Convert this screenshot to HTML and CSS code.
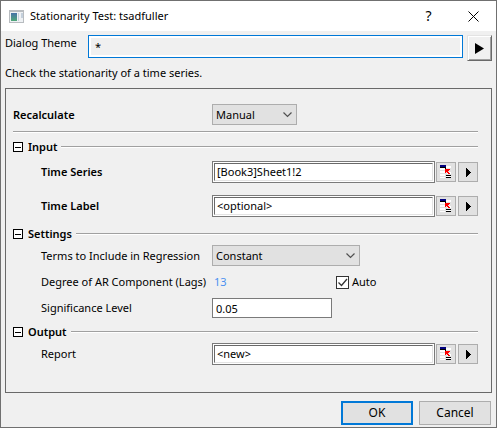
FILE: index.html
```
<!DOCTYPE html>
<html lang="en">
<head>
<meta charset="utf-8">
<title>Stationarity Test: tsadfuller</title>
<link rel="stylesheet" href="styles.css">
</head>
<body>
<svg class="defs" aria-hidden="true">
  <symbol id="pick" viewBox="0 0 12 14" shape-rendering="crispEdges">
    <path fill="#fff" d="M0 3h6v2H0zM6 1h5v2H6zM0 6h6v2H0zM7 7h4v2H7zM0 9h5v2H0zM0 12h5v1H0zM6 11h5v1H6z"/>
    <path fill="#000080" d="M0 0h6v2H0z"/>
    <path fill="#000" d="M0 2h6v1H0zM5 3h1v1H5zM6 10h5v1H6zM6 12h5v1H6z"/>
    <path fill="#f00" d="M5 4h5v1H9v1H8v1h1v1h1v1H8V8H7V7H6v1H5z"/>
  </symbol>
  <symbol id="play" viewBox="0 0 5 9" shape-rendering="crispEdges">
    <path d="M0 0h1v1h1v1h1v1h1v1h1v1H4v1H3v1H2v1H1v1H0z"/>
  </symbol>
</svg>
<main class="dialog">
  <header class="titlebar">
    <svg class="app-icon" viewBox="0 0 15 13" aria-hidden="true">
      <defs><linearGradient id="g" x2="0" y2="1"><stop stop-color="#4672a8"/><stop offset="1" stop-color="#4fa878"/></linearGradient></defs>
      <path fill="#b8bcc0" d="M0 0h15v13H0z"/><path fill="#eef1f4" d="M1 2h13v10H1z"/>
      <path fill="url(#g)" d="M2 3h6v8H2z"/><path fill="#c4d0dc" d="M9 3h1v8H9zM12 3h2v5h-2z"/>
    </svg>
    <h1 class="title">Stationarity Test: tsadfuller</h1>
    <button class="caption" aria-label="Help">?</button>
    <button class="caption" aria-label="Close"><svg width="11" height="11" viewBox="0 0 11 11"><path d="M.5.5l10 10M10.500.5l-10 10" stroke="#000" fill="none"/></svg></button>
  </header>
  <div class="theme">
    <label class="theme-label" for="theme">Dialog Theme</label>
    <input class="theme-input" id="theme" value="*" readonly>
    <button class="theme-menu" aria-label="Theme menu"><svg width="9" height="11" viewBox="0 0 9 11"><path d="M0 0l9 5.500L0 11z"/></svg></button>
  </div>
  <p class="description">Check the stationarity of a time series.</p>
  <form class="panel">
    <div class="row recalc">
      <label class="strong" for="recalc">Recalculate</label>
      <select class="short" id="recalc"><option>Manual</option></select>
    </div>
    <hr class="rule">
    <section>
      <h2 class="head"><button type="button" class="toggle" aria-label="Collapse Input"></button>Input<span class="line"></span></h2>
      <div class="body inputs">
        <div class="row">
          <label class="indent strong" for="series">Time Series</label>
          <div class="picker"><span class="well"><input id="series" value="[Book3]Sheet1!2"></span><button type="button" class="tool" aria-label="Select range"><svg width="12" height="14"><use href="#pick"/></svg></button><button type="button" class="tool menu" aria-label="Menu"><svg width="5" height="9"><use href="#play"/></svg></button></div>
        </div>
        <div class="row">
          <label class="indent strong" for="tlabel">Time Label</label>
          <div class="picker"><span class="well"><input id="tlabel" value="&lt;optional&gt;"></span><button type="button" class="tool" aria-label="Select range"><svg width="12" height="14"><use href="#pick"/></svg></button><button type="button" class="tool menu" aria-label="Menu"><svg width="5" height="9"><use href="#play"/></svg></button></div>
        </div>
      </div>
    </section>
    <section>
      <h2 class="head"><button type="button" class="toggle" aria-label="Collapse Settings"></button>Settings<span class="line"></span></h2>
      <div class="body settings">
        <div class="row">
          <label class="indent" for="terms">Terms to Include in Regression</label>
          <select class="long" id="terms"><option>Constant</option></select>
        </div>
        <div class="row degree">
          <span class="indent">Degree of AR Component (Lags)</span>
          <div class="lags"><output class="value">13</output><label class="auto"><input type="checkbox" checked>Auto</label></div>
        </div>
        <div class="row">
          <label class="indent" for="level">Significance Level</label>
          <input class="number" id="level" value="0.05">
        </div>
      </div>
    </section>
    <section>
      <h2 class="head"><button type="button" class="toggle" aria-label="Collapse Output"></button>Output<span class="line"></span></h2>
      <div class="body outputs">
        <div class="row">
          <label class="indent" for="report">Report</label>
          <div class="picker"><span class="well"><input id="report" value="&lt;new&gt;"></span><button type="button" class="tool" aria-label="Select range"><svg width="12" height="14"><use href="#pick"/></svg></button><button type="button" class="tool menu" aria-label="Menu"><svg width="5" height="9"><use href="#play"/></svg></button></div>
        </div>
      </div>
    </section>
  </form>
  <footer class="actions">
    <button class="action primary">OK</button>
    <button class="action">Cancel</button>
  </footer>
</main>
</body>
</html>
```
FILE: styles.css
```
* { box-sizing: border-box; }
body { margin: 0; background: #f0f0f0; }
body, button, input, select { font-family: "Noto Sans", "Open Sans", sans-serif; font-size: 11px; line-height: 16px; color: #000; }
button, input, select { margin: 0; padding: 0; border-radius: 0; outline: 0; }
h1, h2, p { margin: 0; }
.defs { display: none; }
.dialog { min-height: 100vh; border: 1px solid #707070; background: #f0f0f0; }

.titlebar { display: flex; align-items: center; height: 30px; padding-left: 8px; background: #fff; }
.app-icon { width: 15px; height: 13px; margin-right: 6px; }
.title { flex: 1; font-size: 11px; font-weight: 400; }
.caption { display: grid; place-items: center; width: 45px; height: 29px; border: 0; background: none; font-size: 14px; }

.theme { display: flex; padding: 4px 4px 0; }
.theme-label { width: 83px; }
.theme-input { flex: 1; min-width: 0; height: 23px; padding: 0 6px; border: 1px solid #0078d7; background: #f0f0f0; box-shadow: inset 0 0 0 2px #fff; }
.theme-menu { display: grid; place-items: center; width: 25px; height: 26px; margin-left: 4px; border: 1px solid; border-color: #e3e3e3 #696969 #696969 #e3e3e3; background: #f0f0f0; box-shadow: inset 1px 1px #fff, inset -1px -1px #a0a0a0; }
.description { padding: 4px 4px 7px; }

.panel { margin: 0 4px; padding: 0 13px 0 7px; border: 1px solid #696969; }
.row { display: grid; grid-template-columns: 199px 1fr; align-items: center; }
.recalc { padding: 15px 0 6px; }
.strong, .head { font-weight: 600; }
.indent { padding-left: 28px; white-space: nowrap; }
.rule { height: 2px; margin: 0 0 6px; border: 0; border-top: 1px solid #a0a0a0; background: #fff; }
.head { display: flex; align-items: center; height: 16px; font-size: 11px; }
.toggle { width: 10px; height: 10px; margin-right: 5px; border: 1px solid #000; background: linear-gradient(#000, #000) center / 6px 1px no-repeat #fff; }
.line { flex: 1; height: 2px; margin-left: 4px; border-top: 1px solid #a0a0a0; background: #fff; }
.body { display: grid; }
.inputs { gap: 12px; padding: 6px 0 9px; }
.settings { gap: 5px; padding: 3px 0 6px; }
.outputs { padding: 3px 0 27px; }

select { appearance: none; height: 21px; padding: 0 3px; border: 1px solid #adadad; background: url("data:image/svg+xml,%3Csvg xmlns='http://www.w3.org/2000/svg' width='9' height='6'%3E%3Cpath d='M.5.5l4 4 4-4' fill='none' stroke='%23505050' stroke-width='1.200'/%3E%3C/svg%3E") right 4px center no-repeat #e1e1e1; }
.short { width: 85px; }
.long { width: 148px; }
.picker { display: flex; align-items: center; }
.well { flex: 1; display: flex; height: 22px; padding: 1px; border: 1px solid #7a7a7a; background: #fff; }
.well input { flex: 1; min-width: 0; padding: 0 2px; border: 1px solid; border-color: #696969 #e3e3e3 #e3e3e3 #696969; background: #fff; }
.tool { display: grid; place-items: center; width: 20px; height: 20px; margin-left: 1px; border: 1px solid #adadad; background: #e1e1e1; }
.menu { margin-left: 2px; }
.degree { height: 22px; }
.lags { display: flex; align-items: center; }
.value { width: 124px; padding-left: 2px; color: #4a90f0; }
.auto { display: flex; align-items: center; gap: 3px; }
.auto input { appearance: none; width: 13px; height: 13px; border: 1px solid #333; background: url("data:image/svg+xml,%3Csvg xmlns='http://www.w3.org/2000/svg' width='11' height='11'%3E%3Cpath d='M1.500 5.500l3 3L10 2' fill='none' stroke='%23333' stroke-width='1.300'/%3E%3C/svg%3E") center no-repeat #fff; }
.number { width: 120px; height: 20px; padding: 0 3px; border: 1px solid #7a7a7a; background: #fff; }

.actions { display: flex; justify-content: flex-end; gap: 6px; padding: 8px 5px 2px; }
.action { width: 72px; height: 24px; border: 1px solid #adadad; background: #e1e1e1; font-size: 12px; }
.primary { border: 2px solid #0078d7; }
```
